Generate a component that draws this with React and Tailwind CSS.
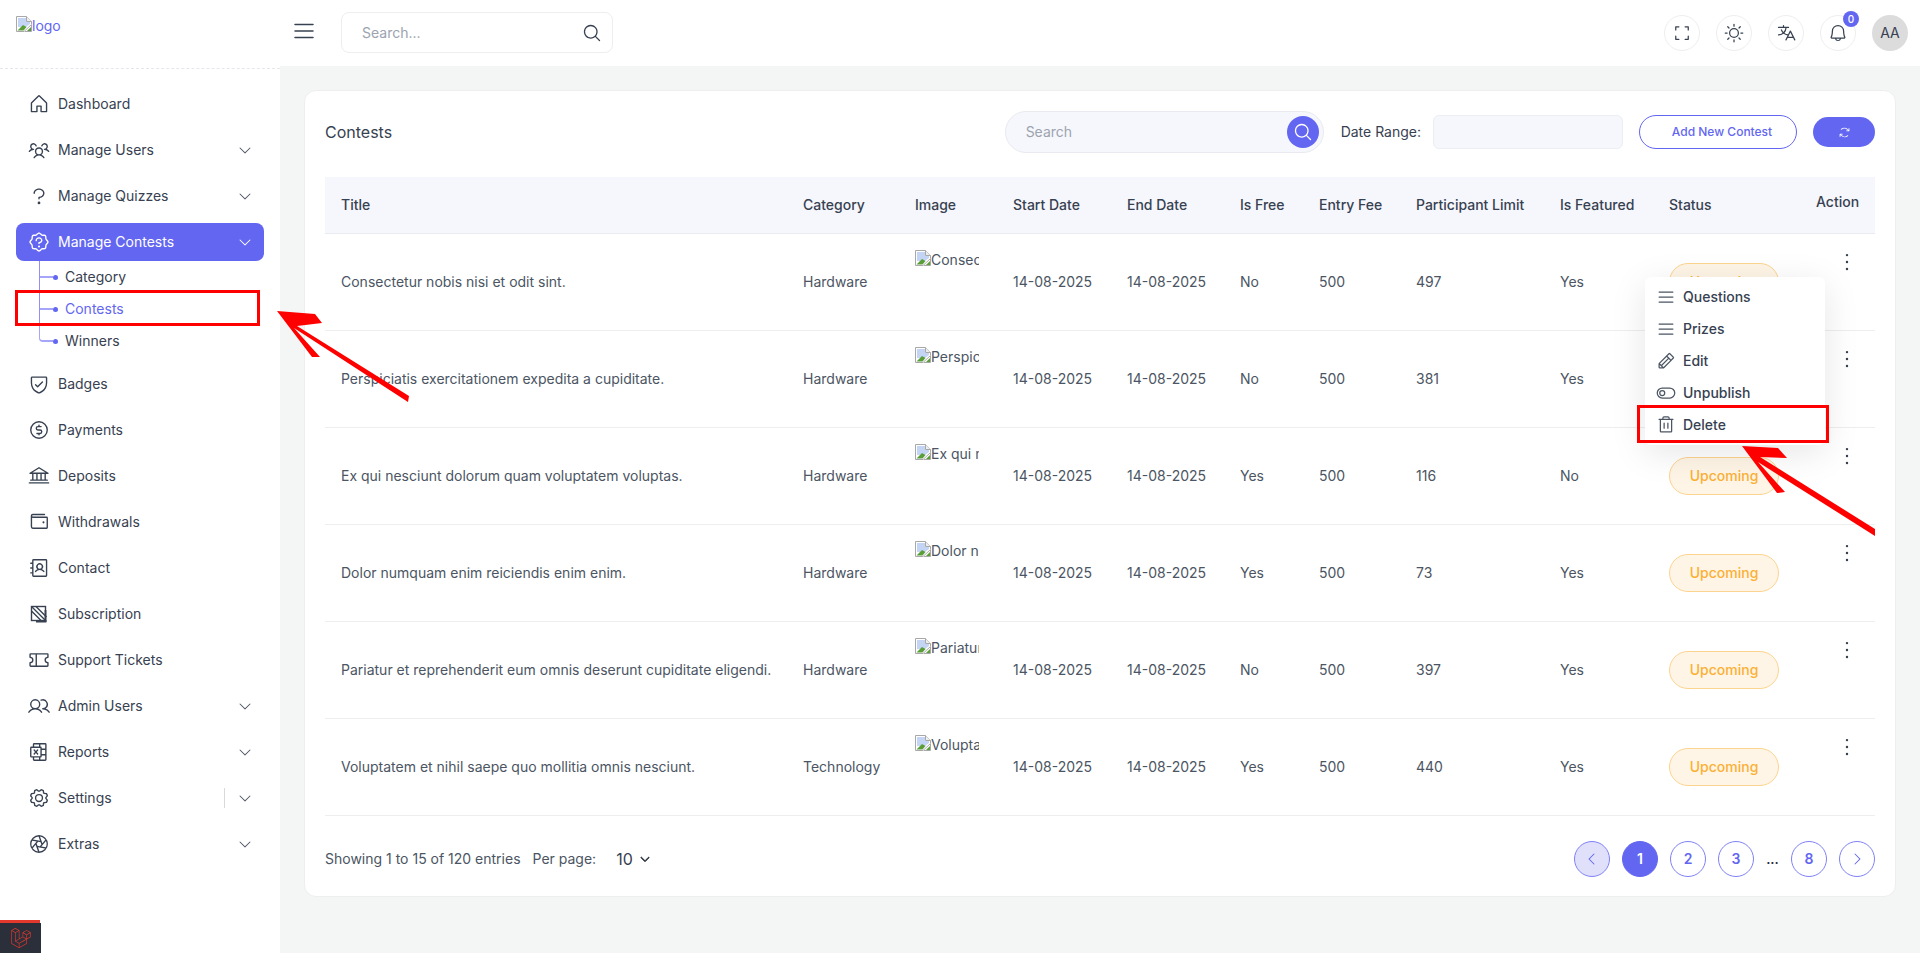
import React from "react";
import {
  PiHouse, PiUsersThree, PiQuestionMark, PiSealQuestion, PiShieldCheck, PiCurrencyCircleDollar,
  PiBank, PiWallet, PiAddressBook, PiTicket, PiUsers, PiMicrosoftExcelLogo, PiGear, PiAperture,
  PiCaretDown, PiCaretLeft, PiCaretRight, PiList, PiMagnifyingGlass, PiCornersOut, PiSun, PiTranslate,
  PiBell, PiArrowsClockwise, PiDotsThreeVertical, PiPencil, PiToggleLeft, PiTrash,
} from "react-icons/pi";
import { FaLaravel } from "react-icons/fa";

function StripedSquare({ size = 22 }) {
  return (
    <svg width={size} height={size} viewBox="0 0 22 22" fill="none" stroke="currentColor" strokeWidth="1.4">
      <rect x="3.5" y="3.5" width="14" height="14" />
      <path d="M3.5 8 14 18.5M3.5 3.5 18.5 18.5M8 3.5 18.5 14" />
      <path d="M17.5 7v11.5H8" strokeWidth="1.8" />
    </svg>
  );
}

function BrokenImg() {
  return (
    <svg width="16" height="16" viewBox="0 0 16 16" className="shrink-0">
      <path d="M.5.5h10l5 5v3L8 15.5H.5z" fill="#fff" stroke="#a8a8a8" />
      <path d="M2 2h8v4h4v2L10 11H2z" fill="#c4d4f4" />
      <path d="M1.5 14.5 7 9l3.5 2-3 3.500z" fill="#5a9e3a" />
      <path d="M10.500.5v5h5" fill="#eee" stroke="#a8a8a8" />
      <path d="M15.500 9v6.500H9" fill="none" stroke="#a8a8a8" strokeWidth="1" />
      <path d="M11 15l4-4v4z" fill="#5a9e3a" />
    </svg>
  );
}

const groupA = [
  { label: "Dashboard", Icon: PiHouse },
  { label: "Manage Users", Icon: PiUsersThree, caret: true },
  { label: "Manage Quizzes", Icon: PiQuestionMark, caret: true },
];
const groupB = [
  { label: "Badges", Icon: PiShieldCheck },
  { label: "Payments", Icon: PiCurrencyCircleDollar },
  { label: "Deposits", Icon: PiBank },
  { label: "Withdrawals", Icon: PiWallet },
  { label: "Contact", Icon: PiAddressBook },
  { label: "Subscription", Icon: StripedSquare },
  { label: "Support Tickets", Icon: PiTicket },
  { label: "Admin Users", Icon: PiUsers, caret: true },
  { label: "Reports", Icon: PiMicrosoftExcelLogo, caret: true },
  { label: "Settings", Icon: PiGear, caret: true, divider: true },
  { label: "Extras", Icon: PiAperture, caret: true },
];

function NavRow({ label, Icon, caret, divider }) {
  return (
    <div className="flex h-[38px] items-center rounded-lg pl-3 pr-[11px] text-sm text-[#374151]">
      <span className="mr-2 flex w-[22px] shrink-0 justify-center"><Icon size={22} /></span>
      <span>{label}</span>
      {divider && <span className="ml-auto mr-3 h-5 w-px bg-[#d9d9d9]" />}
      {caret && <PiCaretDown size={16} className={divider ? "text-[#4b5563]" : "ml-auto text-[#4b5563]"} />}
    </div>
  );
}

function Sidebar() {
  return (
    <aside className="flex w-[280px] shrink-0 flex-col bg-white">
      <div className="h-[69px] border-b border-dashed border-[#e5e7eb] pl-4 pt-4">
        <div className="flex items-start text-sm leading-[20px] text-[#6366f1]">
          <BrokenImg />
          <span>logo</span>
        </div>
      </div>
      <nav className="flex flex-col gap-2 px-4 pt-4">
        {groupA.map((r) => <NavRow key={r.label} {...r} />)}
        <div>
          <div className="flex h-[38px] items-center rounded-lg bg-[#6366f1] pl-3 pr-[11px] text-sm text-white">
            <span className="mr-2 flex w-[22px] justify-center"><PiSealQuestion size={22} /></span>
            <span>Manage Contests</span>
            <PiCaretDown size={16} className="ml-auto" />
          </div>
          <div className="flex flex-col text-sm text-[#374151]">
            {["Category", "Contests", "Winners"].map((s, i) => (
              <div key={s} className="flex h-8 items-center pl-[23px]">
                {i < 2 ? (
                  <span className="flex w-[14px] items-center self-stretch border-l border-[#8f90f7]">
                    <span className="h-[2px] w-full bg-[#a5a6f9]" />
                  </span>
                ) : (
                  <span className="h-[17px] w-[14px] self-start rounded-bl-sm border-b-2 border-l border-[#a5a6f9]" />
                )}
                <span className="h-[5px] w-[5px] rounded-full bg-[#6366f1]" />
                <span className={"ml-[7px] " + (s === "Contests" ? "text-[#6366f1]" : "")}>{s}</span>
              </div>
            ))}
          </div>
        </div>
        {groupB.map((r) => <NavRow key={r.label} {...r} />)}
      </nav>
    </aside>
  );
}

function RoundBtn({ children }) {
  return (
    <div className="relative flex h-9 w-9 items-center justify-center rounded-full border border-[#eeeeee] bg-white text-[#374151]">
      {children}
    </div>
  );
}

function TopBar() {
  return (
    <header className="flex h-[66px] items-center bg-white pl-[11px] pr-3">
      <PiList size={26} className="mb-[5px] text-[#374151]" />
      <div className="mb-px ml-[24px] flex h-[41px] w-[272px] items-center justify-between rounded-lg border border-[#eeeeee] pl-5 pr-[10px]">
        <span className="text-sm text-[#9ca3af]">Search...</span>
        <PiMagnifyingGlass size={20} className="text-[#374151]" />
      </div>
      <div className="ml-auto flex items-center gap-4">
        <RoundBtn><PiCornersOut size={20} /></RoundBtn>
        <RoundBtn><PiSun size={20} /></RoundBtn>
        <RoundBtn><PiTranslate size={20} /></RoundBtn>
        <RoundBtn>
          <PiBell size={20} />
          <span className="absolute -right-[4px] -top-[5px] flex h-4 w-4 items-center justify-center rounded-full bg-[#6366f1] text-[10px] font-medium text-white">0</span>
        </RoundBtn>
        <div className="flex h-9 w-9 items-center justify-center rounded-full bg-[#dcdcdc] text-sm text-[#374151]">AA</div>
      </div>
    </header>
  );
}

const columns = [
  ["Title", "w-[462px]"], ["Category", "w-[112px]"], ["Image", "w-[98px]"], ["Start Date", "w-[114px]"],
  ["End Date", "w-[113px]"], ["Is Free", "w-[79px]"], ["Entry Fee", "w-[97px]"], ["Participant Limit", "w-[144px]"],
  ["Is Featured", "w-[109px]"], ["Status", "w-[147px]"], ["Action", "w-[75px]"],
];

const rows = [
  ["Consectetur nobis nisi et odit sint.", "Hardware", "No", "497", "Yes"],
  ["Perspiciatis exercitationem expedita a cupiditate.", "Hardware", "No", "381", "Yes"],
  ["Ex qui nesciunt dolorum quam voluptatem voluptas.", "Hardware", "Yes", "116", "No"],
  ["Dolor numquam enim reiciendis enim enim.", "Hardware", "Yes", "73", "Yes"],
  ["Pariatur et reprehenderit eum omnis deserunt cupiditate eligendi.", "Hardware", "No", "397", "Yes"],
  ["Voluptatem et nihil saepe quo mollitia omnis nesciunt.", "Technology", "Yes", "440", "Yes"],
];

function Table() {
  const cell = "px-4 pt-px whitespace-nowrap";
  return (
    <table className="w-full table-fixed border-collapse text-sm">
      <colgroup>
        {columns.map(([n, w]) => <col key={n} className={w} />)}
      </colgroup>
      <thead>
        <tr className="h-[56px] border-b border-[#e9ebf0] bg-[#f6f7fc]">
          {columns.map(([n]) => (
            <th key={n} className={"px-4 text-left font-medium text-[#374151] " + (n === "Action" ? "pb-[5px]" : "pt-px")}>{n}</th>
          ))}
        </tr>
      </thead>
      <tbody>
        {rows.map((r) => (
          <tr key={r[0]} className="h-[97px] border-b border-[#eeeeee] text-[#4b5563]">
            <td className={cell}>{r[0]}</td>
            <td className={cell}>{r[1]}</td>
            <td className={cell}>
              <div className="flex h-16 w-16 items-start overflow-hidden whitespace-nowrap leading-[20px]">
                <BrokenImg />
                <span>{r[0]}</span>
              </div>
            </td>
            <td className={cell}>14-08-2025</td>
            <td className={cell}>14-08-2025</td>
            <td className={cell}>{r[2]}</td>
            <td className={cell}>500</td>
            <td className={cell}>{r[3]}</td>
            <td className={cell}>{r[4]}</td>
            <td className={cell}>
              <span className="inline-flex h-[38px] w-[110px] items-center justify-center rounded-full border border-[#fdd48f] bg-[#fff5e6] font-medium text-[#fbb034]">Upcoming</span>
            </td>
            <td className="pl-[34px] pt-[15px] align-top">
              <PiDotsThreeVertical size={26} className="text-[#374151]" />
            </td>
          </tr>
        ))}
      </tbody>
    </table>
  );
}

function PageBtn({ children, kind }) {
  const cls =
    kind === "active"
      ? "bg-[#6366f1] text-white border-[#6366f1]"
      : kind === "prev"
      ? "bg-[#e0e0fb] text-[#6366f1] border-[#7f81f5]"
      : "bg-white text-[#6366f1] border-[#7f81f5]";
  return (
    <span className={"flex h-9 w-9 items-center justify-center rounded-full border text-sm font-semibold " + cls}>{children}</span>
  );
}

function Card() {
  return (
    <section className="rounded-xl border border-[#eeeeee] bg-white px-5 pb-[19px] pt-5">
      <div className="mb-6 flex items-center justify-between">
        <h2 className="text-base text-[#374151]">Contests</h2>
        <div className="flex items-center">
          <div className="flex h-[42px] w-[319px] items-center justify-between rounded-full border border-[#e9ebf0] bg-[#f6f7fc] pl-5 pr-1">
            <span className="text-sm text-[#9ca3af]">Search</span>
            <span className="flex h-8 w-8 items-center justify-center rounded-full bg-[#6366f1] text-white"><PiMagnifyingGlass size={20} /></span>
          </div>
          <span className="ml-[17px] text-sm text-[#374151]">Date Range:</span>
          <div className="ml-3 h-[34px] w-[190px] rounded-md border border-[#eceef3] bg-[#f6f7fc]" />
          <button className="ml-4 h-[34px] w-[158px] rounded-full border border-[#6366f1] bg-white pl-2 text-xs font-medium text-[#6366f1]">Add New Contest</button>
          <button className="ml-4 flex h-[30px] w-[62px] items-center justify-center rounded-full bg-[#6366f1] text-white"><PiArrowsClockwise size={13} /></button>
        </div>
      </div>
      <Table />
      <div className="flex items-center pt-[25px] text-sm text-[#4b5563]">
        <span>Showing 1 to 15 of 120 entries</span>
        <span className="ml-3">Per page:</span>
        <span className="ml-5 text-base text-[#374151]">10</span>
        <PiCaretDown size={12} strokeWidth={18} className="ml-[6px] text-[#1f2937]" />
        <div className="ml-auto flex items-center gap-3">
          <PageBtn kind="prev"><PiCaretLeft size={16} /></PageBtn>
          <PageBtn kind="active">1</PageBtn>
          <PageBtn>2</PageBtn>
          <PageBtn>3</PageBtn>
          <span className="w-[13px] text-center font-medium text-[#1f2937]">...</span>
          <PageBtn>8</PageBtn>
          <PageBtn><PiCaretRight size={16} /></PageBtn>
        </div>
      </div>
    </section>
  );
}

function ActionMenu() {
  const items = [
    ["Questions", PiList], ["Prizes", PiList], ["Edit", PiPencil], ["Unpublish", PiToggleLeft], ["Delete", PiTrash],
  ];
  return (
    <div className="absolute left-[1645px] top-[277px] flex w-[180px] flex-col rounded-md bg-white py-1 text-sm text-[#374151] shadow-[0_8px_36px_rgba(0,0,0,0.1)]">
      {items.map(([label, Icon]) => (
        <div key={label} className="flex h-8 items-center pl-[11px]">
          <Icon size={20} className="mr-[7px] text-[#4b5563]" />
          <span className="font-medium">{label}</span>
        </div>
      ))}
    </div>
  );
}

function Annotations() {
  return (
    <>
      <div className="absolute left-[15px] top-[290px] h-[36px] w-[245px] border-[3px] border-[#ff0000]" />
      <div className="absolute left-[1637px] top-[405px] h-[38px] w-[192px] border-[3px] border-[#ff0000]" />
      <svg className="pointer-events-none absolute left-0 top-0" width="1920" height="953">
        <polygon fill="#ff0000" points="277,311 315,314 322,323 297,326 409,396 408,402 294,328 320,357 312,357" />
        <polygon fill="#ff0000" points="1742,446 1778,448 1787,458 1760,457 1875,529 1875,536 1758,462 1785,492 1777,493" />
      </svg>
    </>
  );
}

export default function App() {
  return (
    <div className="relative flex h-[953px] w-[1920px] overflow-hidden bg-[#f4f6f5] font-['Inter',sans-serif]">
      <Sidebar />
      <div className="flex min-w-0 flex-1 flex-col">
        <TopBar />
        <main className="px-6 pt-6">
          <Card />
        </main>
      </div>
      <ActionMenu />
      <Annotations />
      <div className="absolute bottom-0 left-0 flex h-[33px] w-[41px] flex-col">
        <div className="h-[3px] w-10 bg-[#e3392d]" />
        <div className="flex flex-1 items-center justify-center bg-[#2a2f3a] text-[#e3392d]"><FaLaravel size={20} /></div>
      </div>
    </div>
  );
}
